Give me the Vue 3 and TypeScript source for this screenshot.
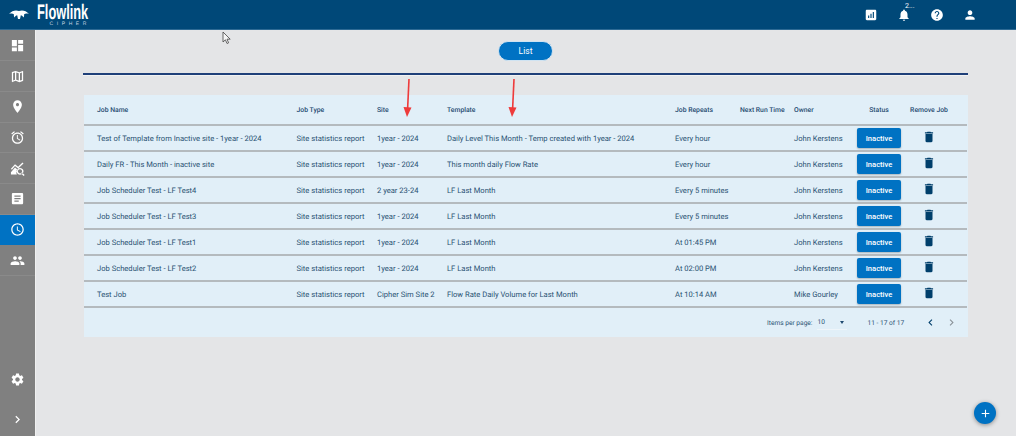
<script setup lang="ts">
interface IJob {
  name: string;
  site: string;
  template: string;
  repeats: string;
  owner: string;
}

const icons: Record<string, string> = {
  dashboard: "M3 13h8V3H3v10zm0 8h8v-6H3v6zm10 0h8V11h-8v10zm0-18v6h8V3h-8z",
  map: "M20.5 3l-.16.03L15 5.1 9 3 3.36 4.9c-.21.07-.36.25-.36.48V20.5c0 .28.22.5.5.5l.16-.03L9 18.9l6 2.1 5.64-1.9c.21-.07.36-.25.36-.48V3.5c0-.28-.22-.5-.5-.5zM10 5.47l4 1.4v11.66l-4-1.4V5.47zm-5 .99l3-1.01v11.7l-3 1.16V6.46zm14 11.08l-3 1.01V6.86l3-1.16v11.84z",
  place: "M12 2C8.13 2 5 5.13 5 9c0 5.25 7 13 7 13s7-7.75 7-13c0-3.87-3.13-7-7-7zm0 9.5c-1.38 0-2.5-1.12-2.5-2.5s1.12-2.5 2.5-2.5 2.5 1.12 2.5 2.5-1.12 2.5-2.5 2.5z",
  alarm: "M22 5.72l-4.6-3.86-1.29 1.53 4.6 3.86L22 5.72zM7.88 3.39L6.6 1.86 2 5.71l1.29 1.53 4.59-3.85zM12.5 8H11v6l4.75 2.85.75-1.23-4-2.37V8zM12 4c-4.97 0-9 4.03-9 9s4.03 9 9 9 9-4.03 9-9-4.03-9-9-9zm0 16c-3.87 0-7-3.13-7-7s3.13-7 7-7 7 3.13 7 7-3.13 7-7 7z",
  stats: "M1.5 12.5L8 5l5 4 7-6.5 1.6 1.6L13 12 8 8l-5 6zM1.5 21.5v-3.5L8 10.5l4.2 3.3A6.5 6.5 0 0 0 11 21.5zM16 11a5.5 5.5 0 1 0 .01 0zm0 2.2a3.3 3.3 0 1 1-.01 0zM19.4 18.2l4 4-1.6 1.6-4-4z",
  article: "M19 3H5c-1.1 0-2 .9-2 2v14c0 1.1.9 2 2 2h14c1.1 0 2-.9 2-2V5c0-1.1-.9-2-2-2zm-5 14H7v-2h7v2zm3-4H7v-2h10v2zm0-4H7V7h10v2z",
  schedule: "M11.99 2C6.47 2 2 6.48 2 12s4.47 10 9.99 10C17.52 22 22 17.52 22 12S17.52 2 11.99 2zM12 20c-4.42 0-8-3.58-8-8s3.58-8 8-8 8 3.58 8 8-3.58 8-8 8zm.5-13H11v6l5.25 3.15.75-1.23-4.5-2.67z",
  people: "M16 11c1.66 0 2.99-1.34 2.99-3S17.66 5 16 5c-1.66 0-3 1.34-3 3s1.34 3 3 3zm-8 0c1.66 0 2.99-1.34 2.99-3S9.66 5 8 5C6.34 5 5 6.34 5 8s1.34 3 3 3zm0 2c-2.33 0-7 1.17-7 3.5V19h14v-2.5c0-2.33-4.67-3.5-7-3.5zm8 0c-.29 0-.62.02-.97.05 1.16.84 1.97 1.97 1.97 3.45V19h6v-2.5c0-2.33-4.67-3.5-7-3.5z",
  settings: "M19.14 12.94c.04-.3.06-.61.06-.94 0-.32-.02-.64-.07-.94l2.03-1.58c.18-.14.23-.41.12-.61l-1.92-3.32c-.12-.22-.37-.29-.59-.22l-2.39.96c-.5-.38-1.03-.7-1.62-.94l-.36-2.54c-.04-.24-.24-.41-.48-.41h-3.84c-.24 0-.43.17-.47.41l-.36 2.54c-.59.24-1.13.57-1.62.94l-2.39-.96c-.22-.08-.47 0-.59.22L2.74 8.87c-.12.21-.08.47.12.61l2.03 1.58c-.05.3-.09.63-.09.94s.02.64.07.94l-2.03 1.58c-.18.14-.23.41-.12.61l1.92 3.32c.12.22.37.29.59.22l2.39-.96c.5.38 1.03.7 1.62.94l.36 2.54c.05.24.24.41.48.41h3.84c.24 0 .44-.17.47-.41l.36-2.54c.59-.24 1.13-.56 1.62-.94l2.39.96c.22.08.47 0 .59-.22l1.92-3.32c.12-.22.07-.47-.12-.61l-2.01-1.58zM12 15.6c-1.98 0-3.6-1.62-3.6-3.6s1.62-3.6 3.6-3.6 3.6 1.62 3.6 3.6-1.62 3.6-3.6 3.6z",
  right: "M10 6L8.59 7.41 13.17 12l-4.58 4.59L10 18l6-6z",
  left: "M15.41 7.41L14 6l-6 6 6 6 1.41-1.41L10.83 12z",
  trash: "M6 19c0 1.1.9 2 2 2h8c1.1 0 2-.9 2-2V7H6v12zM19 4h-3.5l-1-1h-5l-1 1H5v2h14V4z",
  help: "M12 2C6.48 2 2 6.48 2 12s4.48 10 10 10 10-4.48 10-10S17.52 2 12 2zm1 17h-2v-2h2v2zm2.07-7.75l-.9.92C13.45 12.9 13 13.5 13 15h-2v-.5c0-1.1.45-2.1 1.17-2.83l1.24-1.26c.37-.36.59-.86.59-1.41 0-1.1-.9-2-2-2s-2 .9-2 2H8c0-2.21 1.79-4 4-4s4 1.79 4 4c0 .88-.36 1.68-.93 2.25z",
  person: "M12 12c2.21 0 4-1.79 4-4s-1.79-4-4-4-4 1.79-4 4 1.79 4 4 4zm0 2c-2.67 0-8 1.34-8 4v2h16v-2c0-2.66-5.33-4-8-4z",
  bell: "M12 22c1.1 0 2-.9 2-2h-4c0 1.1.89 2 2 2zm6-6v-5c0-3.07-1.64-5.64-4.5-6.32V4c0-.83-.67-1.5-1.5-1.5s-1.5.67-1.5 1.5v.68C7.63 5.36 6 7.92 6 11v5l-2 2v1h16v-1l-2-2z",
  report: "M19 3H5c-1.1 0-2 .9-2 2v14c0 1.1.9 2 2 2h14c1.1 0 2-.9 2-2V5c0-1.1-.9-2-2-2zM9 17H7v-4h2v4zm4 0h-2v-7h2v7zm4 0h-2V7h2v10z",
};

const navItems = ["dashboard", "map", "place", "alarm", "stats", "article", "schedule", "people"];

const columns = ["Job Name", "Job Type", "Site", "Template", "Job Repeats", "Next Run Time", "Owner"];

const jobs: IJob[] = [
  { name: "Test of Template from Inactive site - 1year - 2024", site: "1year - 2024", template: "Daily Level This Month - Temp created with 1year - 2024", repeats: "Every hour", owner: "John Kerstens" },
  { name: "Daily FR - This Month - inactive site", site: "1year - 2024", template: "This month daily Flow Rate", repeats: "Every hour", owner: "John Kerstens" },
  { name: "Job Scheduler Test - LF Test4", site: "2 year 23-24", template: "LF Last Month", repeats: "Every 5 minutes", owner: "John Kerstens" },
  { name: "Job Scheduler Test - LF Test3", site: "1year - 2024", template: "LF Last Month", repeats: "Every 5 minutes", owner: "John Kerstens" },
  { name: "Job Scheduler Test - LF Test1", site: "1year - 2024", template: "LF Last Month", repeats: "At 01:45 PM", owner: "John Kerstens" },
  { name: "Job Scheduler Test - LF Test2", site: "1year - 2024", template: "LF Last Month", repeats: "At 02:00 PM", owner: "John Kerstens" },
  { name: "Test Job", site: "Cipher Sim Site 2", template: "Flow Rate Daily Volume for Last Month", repeats: "At 10:14 AM", owner: "Mike Gourley" },
];
</script>

<template>
  <div class="app">
    <header class="topbar">
      <div class="brand">
        <svg class="brand-mark" viewBox="0 0 20 9">
          <path d="M10 1 C7 -.2 3 .4 0 4 C2.5 3.3 4 3.6 5 4.4 C4.6 5.4 5 6.6 5.6 7.4 C6 6.2 7 5.4 8.2 5.2 L9 9 H11 L11.8 5.2 C13 5.4 14 6.2 14.4 7.4 C15 6.6 15.4 5.4 15 4.4 C16 3.6 17.5 3.3 20 4 C17 .4 13 -.2 10 1 Z" fill="#fff" />
        </svg>
        <div class="brand-text">
          <span class="brand-name">Flowlink</span>
          <span class="brand-sub">CIPHER</span>
        </div>
      </div>
      <div class="top-actions">
        <svg class="top-icon" viewBox="0 0 24 24"><path :d="icons.report" /></svg>
        <div class="bell">
          <svg class="top-icon" viewBox="0 0 24 24"><path :d="icons.bell" /></svg>
          <span class="badge">2...</span>
        </div>
        <svg class="top-icon" viewBox="0 0 24 24"><path :d="icons.help" /></svg>
        <svg class="top-icon" viewBox="0 0 24 24"><path :d="icons.person" /></svg>
      </div>
    </header>

    <div class="body">
      <nav class="sidebar">
        <div v-for="item in navItems" :key="item" class="nav-item" :class="{ active: item === 'schedule' }">
          <svg viewBox="0 0 24 24"><path :d="icons[item]" /></svg>
        </div>
        <div class="nav-bottom">
          <svg viewBox="0 0 24 24"><path :d="icons.settings" /></svg>
          <svg viewBox="0 0 24 24"><path :d="icons.right" /></svg>
        </div>
      </nav>

      <main class="content">
        <div class="list-wrap">
          <button class="list-btn">List</button>
        </div>
        <div class="rule"></div>

        <div class="card">
          <table class="jobs">
            <colgroup>
              <col class="c-name" />
              <col class="c-type" />
              <col class="c-site" />
              <col class="c-template" />
              <col class="c-repeats" />
              <col class="c-next" />
              <col class="c-owner" />
              <col class="c-status" />
              <col class="c-remove" />
              <col class="c-end" />
            </colgroup>
            <thead>
              <tr>
                <th v-for="col in columns" :key="col">{{ col }}</th>
                <th class="center">Status</th>
                <th class="center">Remove Job</th>
                <th></th>
              </tr>
            </thead>
            <tbody>
              <tr v-for="job in jobs" :key="job.name">
                <td>{{ job.name }}</td>
                <td>Site statistics report</td>
                <td>{{ job.site }}</td>
                <td>{{ job.template }}</td>
                <td>{{ job.repeats }}</td>
                <td></td>
                <td>{{ job.owner }}</td>
                <td><button class="status-btn">Inactive</button></td>
                <td class="center">
                  <svg class="trash" viewBox="0 0 24 24"><path :d="icons.trash" /></svg>
                </td>
                <td></td>
              </tr>
            </tbody>
          </table>
          <div class="pager">
            <span class="per-page">Items per page:</span>
            <div class="select">
              <span>10</span>
              <i class="caret"></i>
            </div>
            <span class="range">11 - 17 of 17</span>
            <svg class="page-arrow" viewBox="0 0 24 24"><path :d="icons.left" /></svg>
            <svg class="page-arrow off" viewBox="0 0 24 24"><path :d="icons.right" /></svg>
          </div>
        </div>
      </main>
    </div>

    <!-- annotation marks drawn over the capture -->
    <svg class="arrow arrow-a" viewBox="0 0 12 40">
      <path d="M7 1 L5.6 31" stroke="#ee3b3b" stroke-width="1.6" fill="none" />
      <path d="M1.5 29 L9.5 29.5 L5 39 Z" fill="#ee3b3b" />
    </svg>
    <svg class="arrow arrow-b" viewBox="0 0 12 40">
      <path d="M7 1 L5.6 31" stroke="#ee3b3b" stroke-width="1.6" fill="none" />
      <path d="M1.5 29 L9.5 29.5 L5 39 Z" fill="#ee3b3b" />
    </svg>
    <svg class="cursor" viewBox="0 0 10 14">
      <path d="M1 1 V11 L3.4 8.8 L5 12.5 L6.6 11.8 L5 8.2 H8.2 Z" fill="#f4f4f4" stroke="#444" stroke-width=".8" />
    </svg>
    <button class="fab">
      <svg viewBox="0 0 24 24"><path d="M19 13h-6v6h-2v-6H5v-2h6V5h2v6h6v2z" /></svg>
    </button>
  </div>
</template>

<style>
body {
  margin: 0;
}
</style>

<style scoped>
.app {
  position: relative;
  width: 1016px;
  height: 436px;
  overflow: hidden;
  display: flex;
  flex-direction: column;
  background: #e4e5e7;
  font-family: Roboto, "Liberation Sans", sans-serif;
  text-rendering: geometricPrecision;
}

.topbar {
  flex: 0 0 30px;
  background: #004878;
  display: flex;
  align-items: center;
  justify-content: space-between;
  border-bottom: 1px solid #2d6a94;
  box-sizing: border-box;
}
.brand {
  display: flex;
  align-items: center;
  margin-left: 9px;
  gap: 8px;
}
.brand-mark {
  width: 20px;
  height: 9px;
}
.brand-text {
  width: 50px;
  display: flex;
  flex-direction: column;
  color: #fff;
  line-height: 1;
}
.brand-name {
  font-family: "Liberation Sans", sans-serif;
  font-weight: 700;
  font-size: 21px;
  height: 19px;
  line-height: 19px;
  white-space: nowrap;
  transform: scale(0.61, 1);
  transform-origin: left center;
}
.brand-sub {
  font-family: "Liberation Sans", sans-serif;
  font-size: 5px;
  height: 5px;
  letter-spacing: 3.6px;
  color: #c8d6e0;
  text-align: right;
  margin-right: -3px;
}

.top-actions {
  display: flex;
  align-items: center;
  gap: 19px;
  margin-right: 39px;
}
.top-icon {
  display: block;
  width: 14px;
  height: 14px;
  fill: #fff;
}
.bell {
  position: relative;
}
.badge {
  position: absolute;
  left: 8px;
  top: -5px;
  font-size: 7px;
  color: #fff;
  line-height: 1;
}

.body {
  flex: 1;
  display: flex;
  min-height: 0;
}

.sidebar {
  flex: 0 0 35px;
  background: #808080;
  border-right: 1px solid #f0f0f0;
  padding-top: 0.5px;
  display: flex;
  flex-direction: column;
  box-sizing: content-box;
}
.nav-item {
  height: 30.7px;
  box-sizing: border-box;
  border-bottom: 1px solid #8a8a8a;
  display: flex;
  align-items: center;
  justify-content: center;
}
.nav-item.active {
  background: #0072c3;
  border-bottom-color: #0072c3;
}
.sidebar svg {
  width: 15px;
  height: 15px;
  fill: #fff;
}
.nav-bottom {
  margin-top: auto;
  height: 64px;
  padding-bottom: 9px;
  box-sizing: border-box;
  display: flex;
  flex-direction: column;
  align-items: center;
  justify-content: space-between;
}

.content {
  flex: 1;
  padding: 11px 48px 0 47px;
  min-width: 0;
}
.list-wrap {
  display: flex;
  justify-content: center;
}
.list-btn {
  width: 55px;
  height: 20px;
  padding: 0;
  border: 1px solid #cfe3f2;
  border-radius: 10px;
  background: #0072c3;
  color: #fff;
  font: 400 8.5px Roboto, sans-serif;
}
.rule {
  height: 2px;
  margin-top: 12px;
  background: #1f4079;
  border-bottom: 1px solid #f1f2f3;
}

.card {
  margin-top: 19px;
  margin-left: 1px;
  background: #e1eff8;
}
.jobs {
  width: 883px;
  table-layout: fixed;
  border-collapse: collapse;
}
.c-name { width: 212.5px; }
.c-type { width: 80.5px; }
.c-site { width: 70px; }
.c-template { width: 228px; }
.c-repeats { width: 65px; }
.c-next { width: 54px; }
.c-owner { width: 63px; }
.c-status { width: 44px; }
.c-remove { width: 56px; }
.c-end { width: 10px; }

th,
td {
  padding: 0;
  text-align: left;
  white-space: nowrap;
  border-bottom: 2px solid #b4babe;
}
th {
  height: 28px;
  padding-top: 1px;
  font-size: 6.8px;
  font-weight: 500;
  color: #1f4a70;
}
td {
  height: 24px;
  font-size: 7.6px;
  color: #2a5273;
}
th:first-child,
td:first-child {
  padding-left: 13px;
}
.center {
  text-align: center;
}
.status-btn {
  display: block;
  width: 44px;
  height: 20px;
  padding: 0;
  border: none;
  border-radius: 2px;
  background: #0072c3;
  color: #fff;
  font: 500 7.6px Roboto, sans-serif;
  box-shadow: 0 1px 2px rgba(0, 0, 0, 0.25);
}
.trash {
  display: block;
  width: 14px;
  height: 14px;
  margin: 0 auto 2px;
  fill: #003f6b;
}

.pager {
  height: 29px;
  display: flex;
  align-items: center;
  font-size: 6.6px;
  color: #2a5273;
}
.per-page {
  margin-left: 683px;
}
.select {
  width: 30px;
  margin-left: 5px;
  display: flex;
  align-items: center;
  justify-content: space-between;
  padding-right: 3px;
  box-sizing: border-box;
  height: 15px;
  border-bottom: 1px solid #eef5fa;
}
.caret {
  width: 0;
  height: 0;
  border-left: 2.5px solid transparent;
  border-right: 2.5px solid transparent;
  border-top: 3px solid #1f4a70;
}
.range {
  margin-left: 20px;
  width: 57px;
}
.page-arrow {
  width: 13px;
  height: 13px;
  fill: #003f6b;
  margin-right: 8px;
}
.page-arrow.off {
  fill: #8a9298;
}

.arrow {
  position: absolute;
  width: 12px;
  height: 40px;
}
.arrow-a {
  left: 402px;
  top: 78px;
}
.arrow-b {
  left: 507px;
  top: 78px;
}
.cursor {
  position: absolute;
  left: 222px;
  top: 31px;
  width: 10px;
  height: 14px;
}
.fab {
  position: absolute;
  left: 974px;
  top: 402px;
  width: 22px;
  height: 22px;
  padding: 0;
  border: none;
  border-radius: 50%;
  background: #0072c3;
  box-shadow: 0 1px 4px rgba(0, 0, 0, 0.4);
  display: flex;
  align-items: center;
  justify-content: center;
}
.fab svg {
  width: 13px;
  height: 13px;
  fill: #fff;
}
</style>
